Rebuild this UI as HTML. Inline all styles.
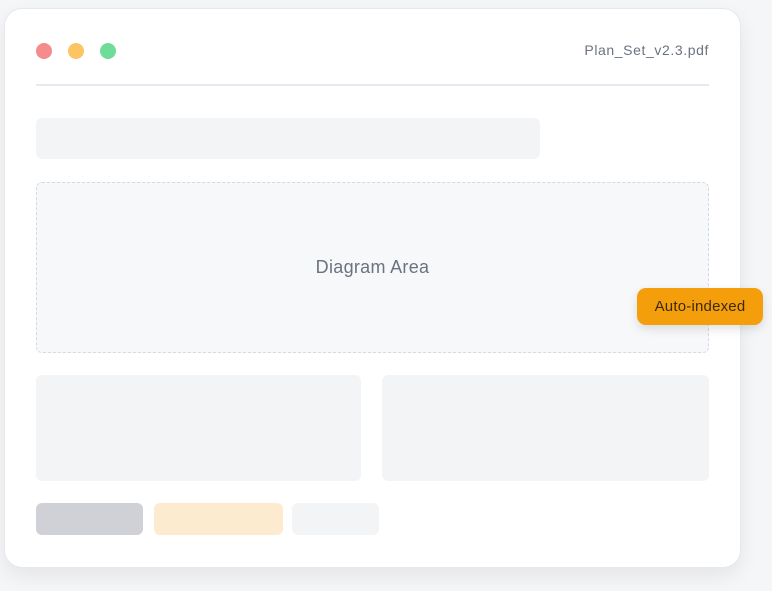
<!DOCTYPE html>
<html><head><style>
*{margin:0;padding:0;box-sizing:border-box}
body{width:772px;height:591px;background:#f5f6f8;position:relative;overflow:hidden;font-family:"Liberation Sans",sans-serif}
.card{position:absolute;left:4px;top:8px;width:737px;height:560px;background:#fff;border:1px solid #e6e8ee;border-radius:18px;box-shadow:0 8px 20px rgba(0,0,0,0.07)}
.a{position:absolute}
.dot{width:16px;height:16px;border-radius:50%;top:43px}
</style></head><body>
<div class="card"></div>
<div class="a dot" style="left:36px;background:#f58b8b"></div>
<div class="a dot" style="left:68px;background:#fcc462"></div>
<div class="a dot" style="left:100px;background:#6fdc98"></div>
<div class="a" style="right:63px;top:42px;font-size:14px;letter-spacing:0.6px;color:#6b7280">Plan_Set_v2.3.pdf</div>
<div class="a" style="left:36px;top:84px;width:673px;height:2px;background:#e6e9ef"></div>
<div class="a" style="left:36px;top:118px;width:504px;height:41px;background:#f3f4f6;border-radius:6px"></div>
<div class="a" style="left:36px;top:182px;width:673px;height:171px;background:#f7f8fa;border:1px dashed #d3dae4;border-radius:6px;display:flex;align-items:center;justify-content:center;font-size:18px;letter-spacing:0.3px;color:#6b7280">Diagram Area</div>
<div class="a" style="left:637px;top:288px;width:126px;height:37px;background:#f59e0b;border-radius:9px;box-shadow:0 4px 10px rgba(0,0,0,0.12);display:flex;align-items:center;justify-content:center;font-size:15px;letter-spacing:0.2px;color:#3a2a10">Auto-indexed</div>
<div class="a" style="left:36px;top:375px;width:325px;height:106px;background:#f3f4f6;border-radius:6px"></div>
<div class="a" style="left:382px;top:375px;width:327px;height:106px;background:#f3f4f6;border-radius:6px"></div>
<div class="a" style="left:36px;top:503px;width:107px;height:32px;background:#d0d1d7;border-radius:6px"></div>
<div class="a" style="left:154px;top:503px;width:129px;height:32px;background:#fdebd0;border-radius:6px"></div>
<div class="a" style="left:292px;top:503px;width:87px;height:32px;background:#f3f4f6;border-radius:6px"></div>
</body></html>
